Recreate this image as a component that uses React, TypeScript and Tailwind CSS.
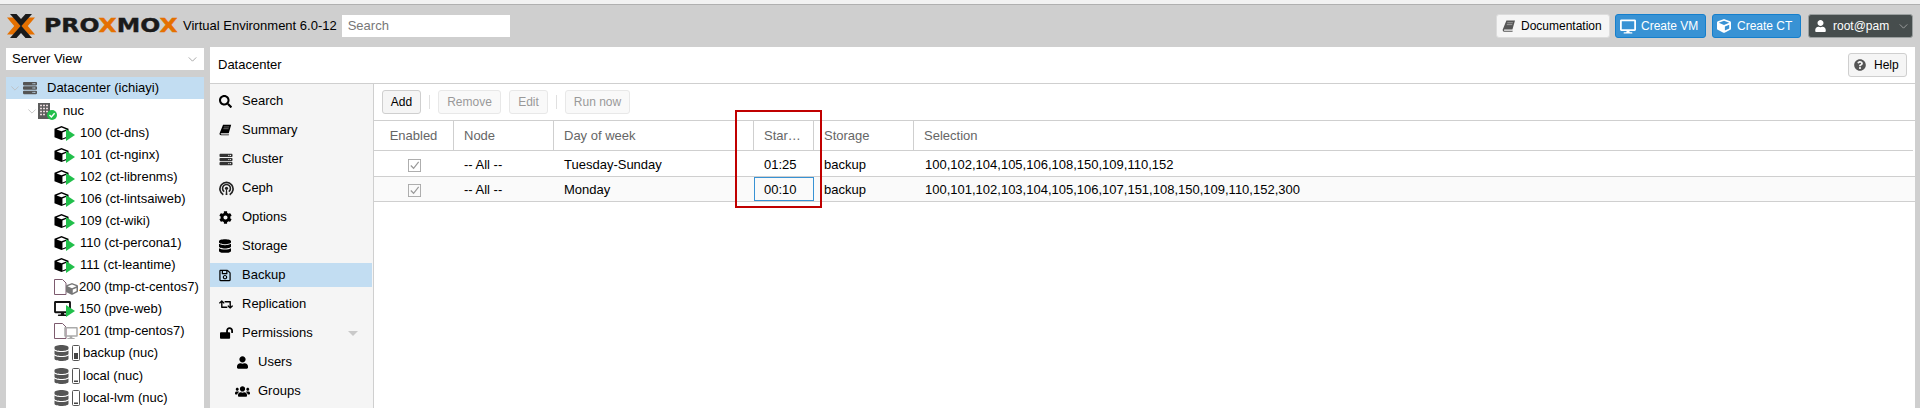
import React from "react";
import { FaSearch, FaServer, FaCog, FaDatabase, FaRegSave, FaRetweet, FaLockOpen, FaUser, FaUsers, FaQuestionCircle, FaDesktop, FaCube } from "react-icons/fa";

const Chevron = ({ className }: { className?: string }) => (
  <svg viewBox="0 0 10 6" className={className} fill="none" stroke="currentColor" strokeWidth="1">
    <polyline points="0.5,0.5 5,5 9.5,0.5" />
  </svg>
);

const Book = ({ className }: { className?: string }) => (
  <svg viewBox="0 0 16 14" className={className}>
    <path d="M5 0.5 H15 L12 11 H3 Q1.6 11 2 12 Q2.3 12.6 3.2 12.6 H12.4 L12 13.6 H2.4 Q0.4 13.6 0.6 11.4 Z" fill="currentColor" />
    <path d="M6 3.2 H12.5 M5.4 5.4 H11.8" stroke="#fff" strokeOpacity="0.55" strokeWidth="0.9" />
  </svg>
);

const Ceph = ({ className }: { className?: string }) => (
  <svg viewBox="0 0 16 16" className={className} fill="none" stroke="currentColor">
    <path d="M4.6 14.6 A7 7 0 1 1 11.4 14.6" strokeWidth="1.8" />
    <path d="M5.6 11.4 A4.2 4.2 0 1 1 10.4 11.4" strokeWidth="1.7" />
    <circle cx="8" cy="7.8" r="1.7" fill="currentColor" stroke="none" />
    <path d="M7 15 L7.5 9 H8.5 L9 15 Z" fill="currentColor" stroke="none" />
  </svg>
);

const LogoX = ({ className }: { className?: string }) => (
  <svg viewBox="0 0 28 24" className={className}>
    <polygon points="0,3.5 6.5,3.5 14,12 6.5,20.5 0,20.5 7.2,12" fill="#e57000" />
    <polygon points="28,3.5 21.5,3.5 14,12 21.5,20.5 28,20.5 20.8,12" fill="#e57000" />
    <polygon points="3,0 9.5,0 14,5 18.5,0 25,0 14,12.4" fill="#1a1a1a" />
    <polygon points="3,24 9.5,24 14,19 18.5,24 25,24 14,11.6" fill="#1a1a1a" />
  </svg>
);

const Cube = () => (
  <svg viewBox="0 0 16 16" className="w-[15px] h-[16px]">
    <polygon points="8,0.5 15.5,3.5 15.5,12.5 8,15.5 0.5,12.5 0.5,3.5" fill="#000" />
    <polygon points="8,2.2 13.2,4.2 8,6.2 2.8,4.2" fill="#fff" />
    <polygon points="9,7.5 14.2,5.4 14.2,11.6 9,13.8" fill="#fff" />
  </svg>
);

const Play = () => (
  <svg viewBox="0 0 9 12" className="absolute right-0 bottom-0 w-[9px] h-[12px]">
    <polygon points="0,0 9,6 0,12" fill="#21bf4b" />
  </svg>
);

const TreeRow = ({ children, selected }: { children: React.ReactNode; selected?: boolean }) => (
  <div className={`flex items-center h-[22px] shrink-0 whitespace-nowrap ${selected ? "bg-[#c2ddf2]" : ""}`}>{children}</div>
);

const CtRow = ({ label }: { label: string }) => (
  <TreeRow>
    <span className="relative ml-[48px] w-[21px] h-[16px] flex shrink-0">
      <Cube />
      <Play />
    </span>
    <span className="ml-[5px]">{label}</span>
  </TreeRow>
);

const Paper = ({ children }: { children: React.ReactNode }) => (
  <span className="relative ml-[48px] w-[25px] h-[16px] flex shrink-0">
    <svg viewBox="0 0 14 16" className="w-[14px] h-[16px]" fill="none" stroke="#7d5a6e" strokeWidth="1">
      <path d="M0.5 0.5 H8.5 L12 4 V15.5 H0.5 Z" fill="#fff" />
    </svg>
    {children}
  </span>
);

const Disk = ({ fill }: { fill: string }) => (
  <span className="flex items-center ml-[48px] shrink-0">
    <FaDatabase className="w-[15px] h-[16px] text-[#555]" />
    <svg viewBox="0 0 8 16" className="w-[8px] h-[16px] ml-[3px]">
      <rect x="0.5" y="0.5" width="7" height="15" rx="1" fill="#fff" stroke="#555" />
      <rect x="2" y={fill === "full" ? 8 : 12.5} width="4" height={fill === "full" ? 6 : 1.5} fill="#444" />
    </svg>
  </span>
);

const menu: [React.ReactNode, string, boolean?][] = [
  [<FaSearch className="w-[13px] h-[13px]" />, "Search"],
  [<Book className="w-[13px] h-[12px]" />, "Summary"],
  [<FaServer className="w-[14px] h-[13px] text-[#333]" />, "Cluster"],
  [<Ceph className="w-[15px] h-[15px] text-[#222]" />, "Ceph"],
  [<FaCog className="w-[13px] h-[13px]" />, "Options"],
  [<FaDatabase className="w-[12px] h-[14px]" />, "Storage"],
  [<FaRegSave className="w-[12px] h-[13px]" />, "Backup", true],
  [<FaRetweet className="w-[14px] h-[13px]" />, "Replication"],
];

const rows = [
  { day: "Tuesday-Sunday", start: "01:25", sel: "100,102,104,105,106,108,150,109,110,152", alt: false },
  { day: "Monday", start: "00:10", sel: "100,101,102,103,104,105,106,107,151,108,150,109,110,152,300", alt: true },
];

const Check = () => (
  <svg viewBox="0 0 14 14" className="w-[13px] h-[13px]" fill="none">
    <rect x="0.5" y="0.5" width="13" height="13" stroke="#a8a8a8" />
    <path d="M3 7 L6 10 L11.5 3" stroke="#9a9a9a" strokeWidth="1.3" />
  </svg>
);

const Dis = ({ children, w }: { children: string; w: string }) => (
  <div className={`${w} h-[24px] flex items-center justify-center rounded-[3px] border border-[#e8e8e8] bg-[#f9f9f9] text-[12px] text-[#999]`}>{children}</div>
);

export default function App() {
  return (
    <div className="relative w-[1920px] h-[408px] overflow-hidden flex flex-col bg-[#cfcfcf] text-[13px] leading-[16px] text-black font-['Liberation_Sans',Arial,sans-serif]">
      <div className="h-[5px] shrink-0 bg-[#f2f2f2] border-b border-[#b0b0b0]" />
      <header className="h-[42px] shrink-0 flex items-center pl-[7px] pr-[7px]">
        <LogoX className="w-[28px] h-[24px] shrink-0" />
        <span className="w-[138px] ml-[9px] shrink-0">
          <span className="inline-block origin-left scale-x-[1.24] whitespace-nowrap text-[19px] leading-[16px] font-bold font-['DejaVu_Sans',sans-serif] text-[#1a1a1a] [-webkit-text-stroke:0.4px]">
            PRO<span className="text-[#e57000]">X</span>MO<span className="text-[#e57000]">X</span>
          </span>
        </span>
        <span className="ml-[1px] whitespace-nowrap">Virtual Environment 6.0-12</span>
        <div className="ml-[5px] w-[168px] h-[22px] bg-white flex items-center px-[6px] text-[#777]">Search</div>
        <div className="flex-1" />
        <div className="w-[114px] h-[24px] flex items-center pl-[5px] gap-[5px] bg-[#f5f5f5] rounded-[3px] border border-[#dcdcdc] text-[12px]">
          <Book className="w-[14px] h-[12px] text-[#555]" />
          <span>Documentation</span>
        </div>
        <div className="ml-[5px] w-[91px] h-[24px] flex items-center pl-[4px] gap-[5px] bg-[#3892d4] rounded-[3px] border border-[#157fcc] text-white text-[12px]">
          <FaDesktop className="w-[16px] h-[15px]" />
          <span>Create VM</span>
        </div>
        <div className="ml-[6px] w-[89px] h-[24px] flex items-center pl-[4px] gap-[6px] bg-[#3892d4] rounded-[3px] border border-[#157fcc] text-white text-[12px]">
          <FaCube className="w-[14px] h-[14px]" />
          <span>Create CT</span>
        </div>
        <div className="ml-[7px] w-[105px] h-[24px] flex items-center pl-[6px] gap-[7px] bg-[#464d4d] rounded-[3px] border border-[#9a9f9f] text-white text-[12px]">
          <FaUser className="w-[11px] h-[12px]" />
          <span>root@pam</span>
          <Chevron className="w-[9px] h-[5px] ml-[3px] text-[#aaa]" />
        </div>
      </header>

      <div className="flex-1 min-h-0 flex pl-[6px] pr-[5px] gap-[6px]">
        <aside className="w-[198px] shrink-0 flex flex-col gap-[7px] -mt-[1px] pt-[2px]">
          <div className="h-[22px] shrink-0 bg-white flex items-center justify-between pl-[6px] pr-[7px]">
            <span>Server View</span>
            <Chevron className="w-[9px] h-[5px] text-[#999]" />
          </div>
          <div className="flex-1 bg-white flex flex-col overflow-hidden">
            <TreeRow selected>
              <Chevron className="ml-[5px] w-[8px] h-[5px] text-[#bbb] shrink-0" />
              <FaServer className="ml-[3px] w-[16px] h-[14px] text-[#555] shrink-0" />
              <span className="ml-[9px]">Datacenter (ichiayi)</span>
            </TreeRow>
            <div className="h-[1px] shrink-0" />
            <TreeRow>
              <Chevron className="ml-[22px] w-[8px] h-[5px] text-[#bbb] shrink-0" />
              <span className="relative ml-[2px] w-[19px] h-[17px] shrink-0">
                <svg viewBox="0 0 12 16" className="w-[12px] h-[16px]">
                  <rect x="0" y="0" width="12" height="16" fill="#5c5c5c" />
                  <path d="M2 2.5H4M5 2.5H7M8 2.5H10M2 5.5H4M5 5.5H7M8 5.5H10M2 8.5H4M5 8.5H7M8 8.5H10M2 11.5H4M5 11.5H7" stroke="#e9d9dc" strokeWidth="1.4" />
                </svg>
                <svg viewBox="0 0 10 10" className="absolute right-0 bottom-0 w-[10px] h-[10px]">
                  <circle cx="5" cy="5" r="5" fill="#21bf4b" />
                  <path d="M2.5 5 L4.4 7 L7.6 3.3" fill="none" stroke="#fff" strokeWidth="1.4" />
                </svg>
              </span>
              <span className="ml-[6px]">nuc</span>
            </TreeRow>
            <CtRow label="100 (ct-dns)" />
            <CtRow label="101 (ct-nginx)" />
            <CtRow label="102 (ct-librenms)" />
            <CtRow label="106 (ct-lintsaiweb)" />
            <CtRow label="109 (ct-wiki)" />
            <CtRow label="110 (ct-percona1)" />
            <CtRow label="111 (ct-leantime)" />
            <TreeRow>
              <Paper>
                <FaCube className="absolute right-[1px] bottom-0 w-[12px] h-[12px] text-[#777]" />
              </Paper>
              <span>200 (tmp-ct-centos7)</span>
            </TreeRow>
            <TreeRow>
              <span className="relative ml-[48px] w-[21px] h-[16px] flex shrink-0">
                <FaDesktop className="w-[17px] h-[15px] text-[#111]" />
                <Play />
              </span>
              <span className="ml-[4px]">150 (pve-web)</span>
            </TreeRow>
            <TreeRow>
              <Paper>
                <FaDesktop className="absolute right-[1px] bottom-0 w-[14px] h-[12px] text-[#aaa]" />
              </Paper>
              <span>201 (tmp-centos7)</span>
            </TreeRow>
            <TreeRow><Disk fill="full" /><span className="ml-[3px]">backup (nuc)</span></TreeRow>
            <div className="h-[1px] shrink-0" />
            <TreeRow><Disk fill="low" /><span className="ml-[3px]">local (nuc)</span></TreeRow>
            <TreeRow><Disk fill="low" /><span className="ml-[3px]">local-lvm (nuc)</span></TreeRow>
          </div>
        </aside>

        <main className="flex-1 min-w-0 bg-white flex flex-col">
          <div className="h-[37px] shrink-0 flex items-center justify-between pl-[8px] pr-[8px] border-b border-[#cfcfcf]">
            <span>Datacenter</span>
            <div className="w-[59px] h-[24px] flex items-center pl-[5px] gap-[8px] rounded-[3px] border border-[#cfcfcf] bg-[#f5f5f5] text-[12px]">
              <FaQuestionCircle className="w-[12px] h-[12px] text-[#555]" />
              <span>Help</span>
            </div>
          </div>
          <div className="flex-1 min-h-0 flex">
            <nav className="w-[164px] shrink-0 bg-[#f5f5f5] border-r border-[#cfcfcf] flex flex-col pr-[1px] pt-[5px] gap-[5px] overflow-hidden">
              {menu.map(([icon, label, active]) => (
                <div key={label} className={`h-[24px] shrink-0 flex items-center ${active ? "bg-[#c2ddf2]" : ""}`}>
                  <span className="w-[32px] pl-[9px] flex items-center shrink-0 text-black">{icon}</span>
                  <span>{label}</span>
                </div>
              ))}
              <div className="h-[24px] shrink-0 flex items-center">
                <span className="w-[32px] pl-[10px] flex items-center shrink-0"><FaLockOpen className="w-[13px] h-[12px]" /></span>
                <span>Permissions</span>
                <span className="ml-auto mr-[14px] w-0 h-0 border-x-[5px] border-x-transparent border-t-[5px] border-t-[#c9c9c9]" />
              </div>
              <div className="h-[24px] shrink-0 flex items-center">
                <span className="w-[48px] pl-[27px] flex items-center shrink-0"><FaUser className="w-[11px] h-[13px]" /></span>
                <span>Users</span>
              </div>
              <div className="h-[24px] shrink-0 flex items-center">
                <span className="w-[48px] pl-[25px] flex items-center shrink-0"><FaUsers className="w-[15px] h-[13px]" /></span>
                <span>Groups</span>
              </div>
            </nav>
            <section className="flex-1 min-w-0 flex flex-col">
              <div className="h-[37px] shrink-0 flex items-center pl-[8px] border-b border-[#cfcfcf]">
                <div className="w-[39px] h-[24px] flex items-center justify-center rounded-[3px] border border-[#cfcfcf] bg-[#f5f5f5] text-[12px]">Add</div>
                <div className="mx-[8px] w-px h-[14px] bg-[#e0e0e0]" />
                <Dis w="w-[63px]">Remove</Dis>
                <div className="w-[8px]" />
                <Dis w="w-[39px]">Edit</Dis>
                <div className="mx-[8px] w-px h-[14px] bg-[#e0e0e0]" />
                <Dis w="w-[65px]">Run now</Dis>
              </div>
              <div className="h-[30px] shrink-0 flex items-center border-b border-[#cfcfcf] mr-[2px] text-[#666]">
                <div className="w-[80px] h-full flex items-center justify-center border-r border-[#cfcfcf]">Enabled</div>
                <div className="w-[100px] h-full flex items-center pl-[10px] border-r border-[#cfcfcf]">Node</div>
                <div className="w-[200px] h-full flex items-center pl-[10px] border-r border-[#cfcfcf]">Day of week</div>
                <div className="w-[60px] h-full flex items-center pl-[10px] border-r border-[#cfcfcf]">Star…</div>
                <div className="w-[100px] h-full flex items-center pl-[10px] border-r border-[#cfcfcf]">Storage</div>
                <div className="flex-1 h-full flex items-center pl-[10px]">Selection</div>
              </div>
              {rows.map((r) => (
                <div key={r.day} className={`flex shrink-0 items-center border-b border-[#cfcfcf] ${r.alt ? "h-[25px] bg-[#fafafa]" : "h-[26px] pt-[1px]"}`}>
                  <div className="w-[80px] flex justify-center pt-[2px]"><Check /></div>
                  <div className="w-[100px] pl-[10px] pt-[2px]">-- All --</div>
                  <div className="w-[200px] pl-[10px] pt-[2px]">{r.day}</div>
                  <div className={`w-[60px] h-full flex items-center pt-[2px] ${r.alt ? "border border-[#3892d4] pl-[9px] bg-[#fafafa]" : "pl-[10px]"}`}>{r.start}</div>
                  <div className="w-[100px] pl-[10px] pt-[2px]">backup</div>
                  <div className="flex-1 pl-[11px] pt-[2px] whitespace-nowrap">{r.sel}</div>
                </div>
              ))}
            </section>
          </div>
        </main>
      </div>
      <div className="absolute left-[735px] top-[110px] w-[87px] h-[98px] border-[2.5px] border-[#c00000] pointer-events-none" />
    </div>
  );
}
